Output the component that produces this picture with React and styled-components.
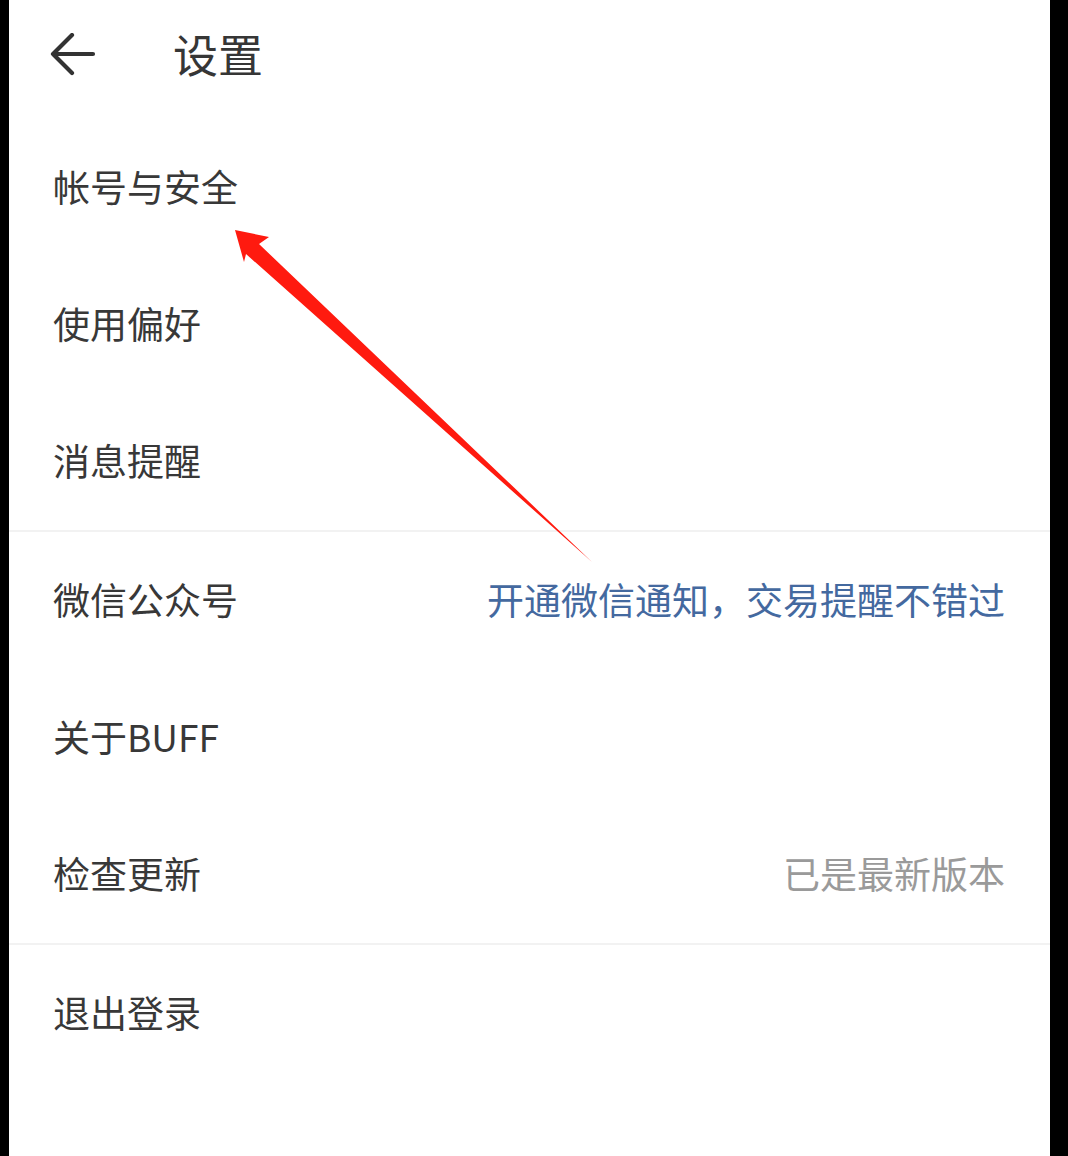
import React from "react";
import styled, { createGlobalStyle } from "styled-components";

const Global = createGlobalStyle`
  html, body { margin: 0; padding: 0; background: #000; }
  body { font-family: "Noto Sans CJK SC", "Noto Sans", sans-serif; }
`;

const Frame = styled.div`
  position: relative;
  margin-left: 9px;
  width: 1041px;
  height: 1156px;
  background: #fff;
  overflow: hidden;
`;

const Header = styled.header`
  display: flex;
  align-items: center;
  height: 106px;
  padding-left: 41px;
  box-sizing: border-box;
`;

const BackButton = styled.button`
  display: flex;
  align-items: center;
  justify-content: center;
  width: 46px;
  height: 46px;
  margin-top: 6px;
  padding: 0;
  border: none;
  background: none;
  color: #333;
`;

const Title = styled.h1`
  margin: 0 0 0 77px;
  font-size: 45px;
  font-weight: 400;
  color: #363636;
  line-height: 1;
`;

const List = styled.div`
  padding-top: 13px;
  display: flex;
  flex-direction: column;
`;

const Row = styled.div`
  display: flex;
  align-items: center;
  justify-content: space-between;
  height: 137px;
  padding: 0 45px 0 44px;
  box-sizing: border-box;
`;

const Label = styled.span`
  font-size: 37px;
  color: #383838;
  line-height: 1;
  margin-top: -3px;
`;

const Extra = styled.span`
  font-size: 37px;
  line-height: 1;
  margin-top: -3px;
  color: ${(p) => (p.$tone === "link" ? "#44699f" : "#9a9a9a")};
`;

const Divider = styled.div`
  height: 2px;
  background: #f2f2f2;
`;

const Annotation = styled.svg`
  position: absolute;
  left: 0;
  top: 0;
  pointer-events: none;
`;

const groups = [
  [{ label: "帐号与安全" }, { label: "使用偏好" }, { label: "消息提醒" }],
  [
    { label: "微信公众号", extra: "开通微信通知，交易提醒不错过", tone: "link" },
    { label: "关于BUFF" },
    { label: "检查更新", extra: "已是最新版本", tone: "muted" },
  ],
  [{ label: "退出登录" }],
];

export default function App() {
  return (
    <>
      <Global />
      <Frame>
        <Header>
          <BackButton aria-label="返回">
            <svg width="46" height="46" viewBox="0 0 46 46" fill="none">
              <path
                d="M3 21 H43 M22 2 L3 21 L22 40"
                stroke="currentColor"
                strokeWidth="4.2"
                strokeLinecap="round"
                strokeLinejoin="round"
              />
            </svg>
          </BackButton>
          <Title>设置</Title>
        </Header>
        <List>
          {groups.map((g, gi) => (
            <React.Fragment key={gi}>
              {gi > 0 && <Divider />}
              {g.map((r) => (
                <Row key={r.label}>
                  <Label>{r.label}</Label>
                  {r.extra && <Extra $tone={r.tone}>{r.extra}</Extra>}
                </Row>
              ))}
            </React.Fragment>
          ))}
        </List>
        <Annotation width="1041" height="1156" viewBox="9 0 1041 1156">
          <polygon
            points="235,230 269,237 259,244 592,562 246,254 244,262"
            fill="#ff1a0f"
          />
        </Annotation>
      </Frame>
    </>
  );
}
